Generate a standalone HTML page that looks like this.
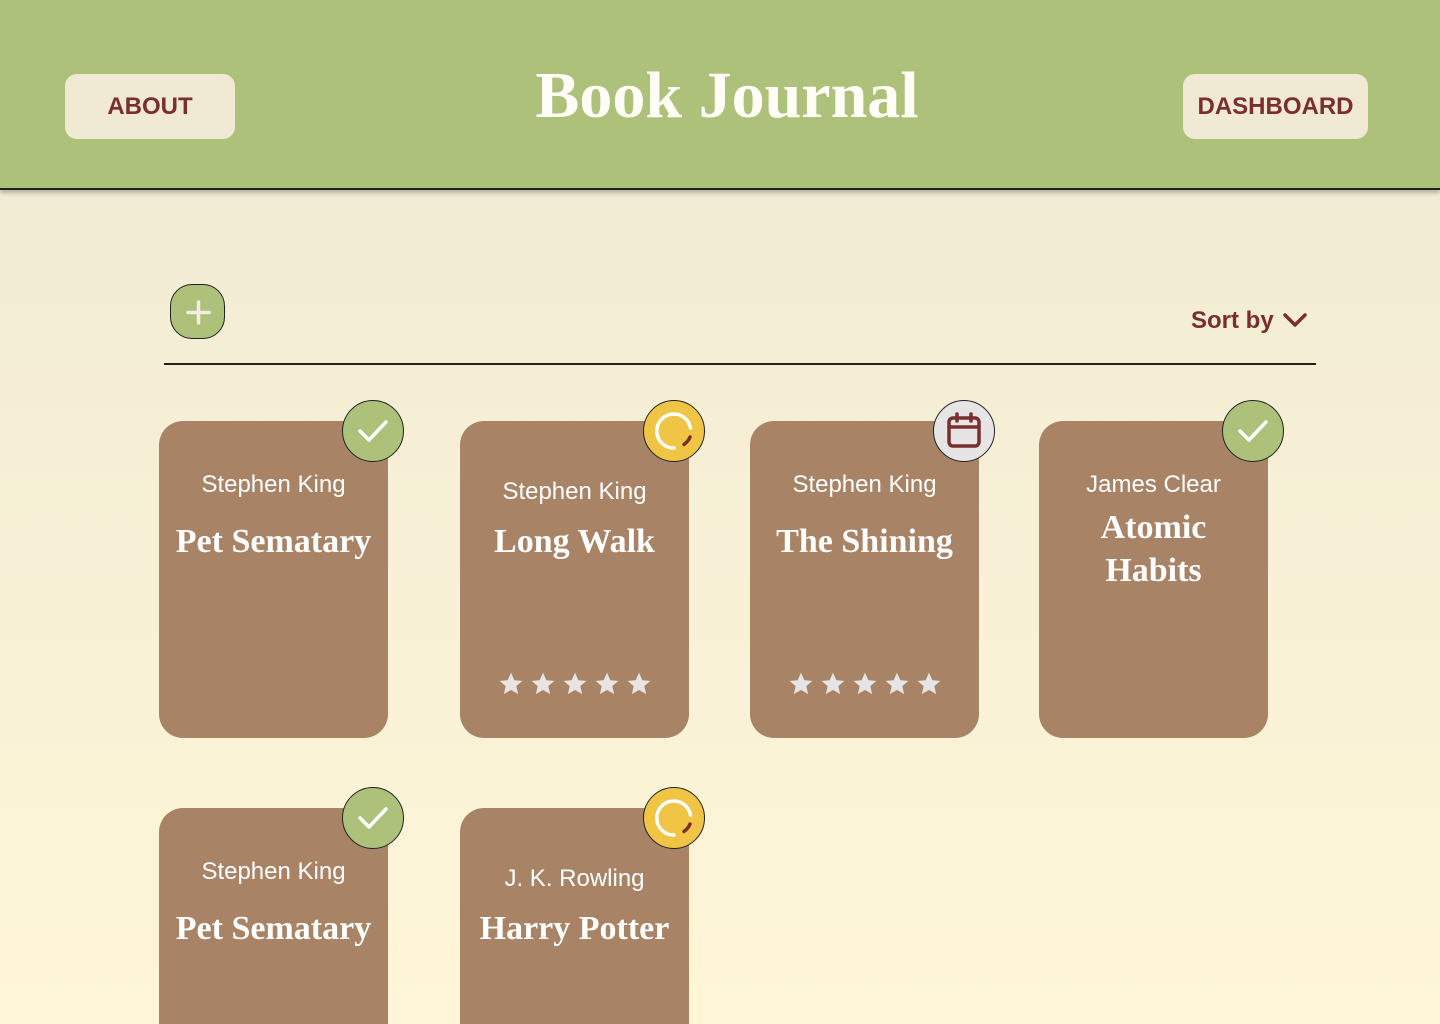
<!DOCTYPE html>
<html><head><meta charset="utf-8"><style>
*{margin:0;padding:0;box-sizing:border-box}
html,body{width:1440px;height:1024px;overflow:hidden}
body{position:relative;background:linear-gradient(#F2ECD5 190px,#FEF6D6 1024px);font-family:"Liberation Sans",sans-serif}
.hdr{position:absolute;left:0;top:0;width:1440px;height:190px;background:#ADC17A;border-bottom:2px solid #222;box-shadow:0 3px 4px rgba(0,0,0,.25)}
.btn{position:absolute;top:74px;height:65px;background:#F0E9D4;border-radius:12px;color:#7A2E2E;font-size:24px;font-weight:bold;display:flex;align-items:center;justify-content:center}
h1{position:absolute;left:0;width:1454px;text-align:center;top:58px;font-family:"Liberation Serif",serif;font-weight:bold;font-size:66px;color:#FFFDF6}
.plus{position:absolute;left:170px;top:284px;width:55px;height:55px;border-radius:22px;background:#ADC17A;border:1.5px solid #222}
.sort{position:absolute;left:1191px;top:307px;color:#7A2E2E;font-weight:bold;font-size:24px}
.line{position:absolute;left:164px;top:363px;width:1152px;height:1.5px;background:#222}
.card{position:absolute;width:229px;height:317px;background:#A88366;border-radius:24px;color:#fff;text-align:center}
.r2{height:216px;border-radius:24px 24px 0 0}
.au{position:absolute;left:0;right:0;font-size:24px}
.ti{position:absolute;left:-10px;right:-10px;font-family:"Liberation Serif",serif;font-weight:bold;font-size:34px;line-height:43px}
.st{position:absolute;top:250px;left:0;right:0;display:flex;justify-content:center;gap:6px}
.bd{position:absolute;width:62px;height:62px;border-radius:50%;border:1.5px solid #222;right:-16px;top:-21px;display:flex;align-items:center;justify-content:center}
</style></head><body>
<div class="hdr"></div>
<div class="btn" style="left:65px;width:170px">ABOUT</div>
<div class="btn" style="left:1183px;width:185px">DASHBOARD</div>
<h1>Book Journal</h1>
<div class="plus"><svg width="55" height="55" viewBox="0 0 55 55"><path d="M27.5 17v21M17 27.5h21" stroke="#F3EFE0" stroke-width="3.5" stroke-linecap="round"/></svg></div>
<div class="sort">Sort by <svg width="26" height="18" viewBox="0 0 26 18" style="vertical-align:-1px;margin-left:2px"><path d="M3 4l10 10L23 4" stroke="#7A2E2E" stroke-width="3.5" fill="none" stroke-linecap="round" stroke-linejoin="round"/></svg></div>
<div class="line"></div>

<div class="card" style="left:159px;top:421px"><div class="au" style="top:50px">Stephen King</div><div class="ti" style="top:99px">Pet Sematary</div>
<div class="bd" style="background:#ADC17A"><svg width="36" height="36" viewBox="0 0 36 36"><path d="M5 18l9 9L31 9" stroke="#fff" stroke-width="3.5" fill="none" stroke-linecap="round" stroke-linejoin="round"/></svg></div></div>

<div class="card" style="left:460px;top:421px"><div class="au" style="top:57px">Stephen King</div><div class="ti" style="top:99px">Long Walk</div>
<div class="st">
<svg width="26" height="26" viewBox="0 0 24 24"><path d="M12 1.5l3.1 7 7.4.6-5.6 4.9 1.7 7.4L12 17.5 5.4 21.4l1.7-7.4L1.5 9.1l7.4-.6z" fill="#E6E4E4"/></svg><svg width="26" height="26" viewBox="0 0 24 24"><path d="M12 1.5l3.1 7 7.4.6-5.6 4.9 1.7 7.4L12 17.5 5.4 21.4l1.7-7.4L1.5 9.1l7.4-.6z" fill="#E6E4E4"/></svg><svg width="26" height="26" viewBox="0 0 24 24"><path d="M12 1.5l3.1 7 7.4.6-5.6 4.9 1.7 7.4L12 17.5 5.4 21.4l1.7-7.4L1.5 9.1l7.4-.6z" fill="#E6E4E4"/></svg><svg width="26" height="26" viewBox="0 0 24 24"><path d="M12 1.5l3.1 7 7.4.6-5.6 4.9 1.7 7.4L12 17.5 5.4 21.4l1.7-7.4L1.5 9.1l7.4-.6z" fill="#E6E4E4"/></svg><svg width="26" height="26" viewBox="0 0 24 24"><path d="M12 1.5l3.1 7 7.4.6-5.6 4.9 1.7 7.4L12 17.5 5.4 21.4l1.7-7.4L1.5 9.1l7.4-.6z" fill="#E6E4E4"/></svg></div>
<div class="bd" style="background:#F0C444"><svg width="50" height="50" viewBox="0 0 50 50"><path d="M41.5 22A17 17 0 1 0 25 42" stroke="#fff" stroke-width="3.5" fill="none" stroke-linecap="round"/><path d="M41 31a17 17 0 0 1-6 7.5" stroke="#7A2E2E" stroke-width="3.5" fill="none" stroke-linecap="round"/></svg></div></div>

<div class="card" style="left:750px;top:421px"><div class="au" style="top:50px">Stephen King</div><div class="ti" style="top:99px">The Shining</div>
<div class="st">
<svg width="26" height="26" viewBox="0 0 24 24"><path d="M12 1.5l3.1 7 7.4.6-5.6 4.9 1.7 7.4L12 17.5 5.4 21.4l1.7-7.4L1.5 9.1l7.4-.6z" fill="#E6E4E4"/></svg><svg width="26" height="26" viewBox="0 0 24 24"><path d="M12 1.5l3.1 7 7.4.6-5.6 4.9 1.7 7.4L12 17.5 5.4 21.4l1.7-7.4L1.5 9.1l7.4-.6z" fill="#E6E4E4"/></svg><svg width="26" height="26" viewBox="0 0 24 24"><path d="M12 1.5l3.1 7 7.4.6-5.6 4.9 1.7 7.4L12 17.5 5.4 21.4l1.7-7.4L1.5 9.1l7.4-.6z" fill="#E6E4E4"/></svg><svg width="26" height="26" viewBox="0 0 24 24"><path d="M12 1.5l3.1 7 7.4.6-5.6 4.9 1.7 7.4L12 17.5 5.4 21.4l1.7-7.4L1.5 9.1l7.4-.6z" fill="#E6E4E4"/></svg><svg width="26" height="26" viewBox="0 0 24 24"><path d="M12 1.5l3.1 7 7.4.6-5.6 4.9 1.7 7.4L12 17.5 5.4 21.4l1.7-7.4L1.5 9.1l7.4-.6z" fill="#E6E4E4"/></svg></div>
<div class="bd" style="background:#E6E4E4"><svg width="36" height="40" viewBox="0 0 36 40"><rect x="3" y="7" width="30" height="28" rx="4" stroke="#7A2E2E" stroke-width="3.5" fill="none"/><path d="M3 16h30M11 3v7M25 3v7" stroke="#7A2E2E" stroke-width="3.5" stroke-linecap="round"/></svg></div></div>

<div class="card" style="left:1039px;top:421px"><div class="au" style="top:50px">James Clear</div><div class="ti" style="top:85px">Atomic<br>Habits</div>
<div class="bd" style="background:#ADC17A"><svg width="36" height="36" viewBox="0 0 36 36"><path d="M5 18l9 9L31 9" stroke="#fff" stroke-width="3.5" fill="none" stroke-linecap="round" stroke-linejoin="round"/></svg></div></div>

<div class="card r2" style="left:159px;top:808px"><div class="au" style="top:50px">Stephen King</div><div class="ti" style="top:99px">Pet Sematary</div>
<div class="bd" style="background:#ADC17A"><svg width="36" height="36" viewBox="0 0 36 36"><path d="M5 18l9 9L31 9" stroke="#fff" stroke-width="3.5" fill="none" stroke-linecap="round" stroke-linejoin="round"/></svg></div></div>

<div class="card r2" style="left:460px;top:808px"><div class="au" style="top:57px">J. K. Rowling</div><div class="ti" style="top:99px">Harry Potter</div>
<div class="bd" style="background:#F0C444"><svg width="50" height="50" viewBox="0 0 50 50"><path d="M41.5 22A17 17 0 1 0 25 42" stroke="#fff" stroke-width="3.5" fill="none" stroke-linecap="round"/><path d="M41 31a17 17 0 0 1-6 7.5" stroke="#7A2E2E" stroke-width="3.5" fill="none" stroke-linecap="round"/></svg></div></div>
</body></html>
